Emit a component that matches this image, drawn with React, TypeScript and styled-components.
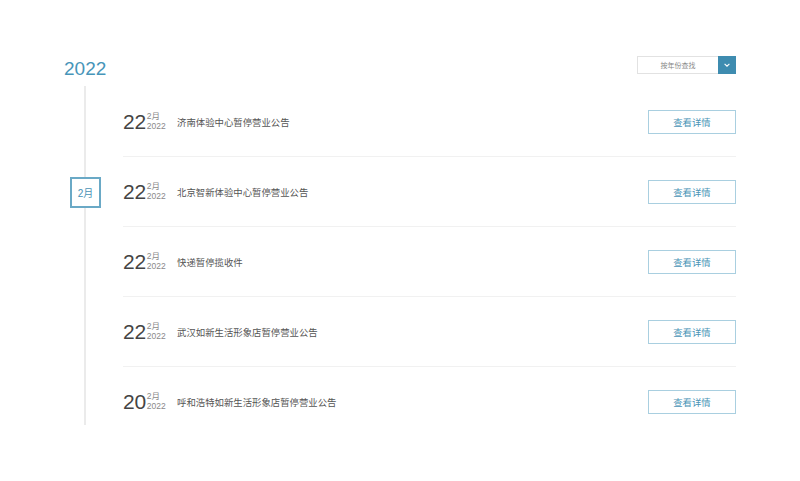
import { createGlobalStyle, styled } from "styled-components";

const GlobalStyle = createGlobalStyle`
  html, body {
    margin: 0;
    padding: 0;
    background: #fff;
    font-family: "Liberation Sans", "Noto Sans CJK SC", sans-serif;
  }
`;

const Page = styled.div`
  width: 672px;
  padding: 55px 0 0 64px;
`;

const Header = styled.div`
  display: flex;
  justify-content: space-between;
  align-items: center;
  height: 28px;
`;

const Year = styled.div`
  font-size: 19px;
  color: #4795b9;
  line-height: 28px;
`;

const Finder = styled.div`
  display: flex;
  height: 18px;
  margin-top: -8px;
`;

const FinderLabel = styled.div`
  width: 80px;
  border: 1px solid #e2e2e2;
  border-right: 0;
  font-size: 7px;
  color: #888;
  display: flex;
  align-items: center;
  justify-content: center;
`;

const FinderBtn = styled.div`
  width: 18px;
  background: #3e8cb0;
  display: flex;
  align-items: center;
  justify-content: center;
`;

const Timeline = styled.div`
  display: flex;
  margin-top: 3px;
`;

const Rail = styled.div`
  position: relative;
  width: 59px;
  flex-shrink: 0;
  &::before {
    content: "";
    position: absolute;
    left: 20px;
    top: 0;
    bottom: 11px;
    width: 2px;
    background: #ebebeb;
  }
`;

const MonthBox = styled.div`
  position: relative;
  margin: 91px 0 0 6px;
  width: 27px;
  height: 27px;
  border: 2px solid #6aa9c6;
  background: #fff;
  color: #4a93b6;
  font-size: 10px;
  display: flex;
  align-items: center;
  justify-content: center;
`;

const List = styled.div`
  flex: 1;
  padding-top: 1px;
`;

const Row = styled.div`
  height: 69px;
  display: flex;
  align-items: center;
  border-bottom: 1px solid #f1f1f1;
  &:last-child {
    border-bottom: 0;
  }
`;

const DateBlock = styled.div`
  display: flex;
  align-items: center;
  width: 54px;
`;

const Day = styled.div`
  font-size: 21px;
  color: #444;
  line-height: 1;
  letter-spacing: -0.3px;
`;

const DateSmall = styled.div`
  display: flex;
  flex-direction: column;
  margin-left: 1px;
  font-size: 8.5px;
  line-height: 10px;
  color: #8a8a8a;
  margin-top: -1px;
`;

const Title = styled.div`
  flex: 1;
  font-size: 9.4px;
  color: #555;
`;

const DetailBtn = styled.button`
  width: 88px;
  height: 24px;
  border: 1px solid #a9cfe0;
  background: #fff;
  color: #4a93b6;
  font-family: inherit;
  font-size: 9.4px;
  padding: 0;
  cursor: pointer;
`;

const items = [
  { day: "22", title: "济南体验中心暂停营业公告" },
  { day: "22", title: "北京智新体验中心暂停营业公告" },
  { day: "22", title: "快递暂停揽收件" },
  { day: "22", title: "武汉如新生活形象店暂停营业公告" },
  { day: "20", title: "呼和浩特如新生活形象店暂停营业公告" },
];

export default function App() {
  return (
    <>
      <GlobalStyle />
      <Page>
        <Header>
          <Year>2022</Year>
          <Finder>
            <FinderLabel>按年份查找</FinderLabel>
            <FinderBtn>
              <svg width="8" height="8" viewBox="0 0 10 10">
                <path d="M2 3.5 L5 6.5 L8 3.5" fill="none" stroke="#fff" strokeWidth="1.4" />
              </svg>
            </FinderBtn>
          </Finder>
        </Header>
        <Timeline>
          <Rail>
            <MonthBox>2月</MonthBox>
          </Rail>
          <List>
            {items.map((it, i) => (
              <Row key={i}>
                <DateBlock>
                  <Day>{it.day}</Day>
                  <DateSmall>
                    <span>2月</span>
                    <span>2022</span>
                  </DateSmall>
                </DateBlock>
                <Title>{it.title}</Title>
                <DetailBtn>查看详情</DetailBtn>
              </Row>
            ))}
          </List>
        </Timeline>
      </Page>
    </>
  );
}
